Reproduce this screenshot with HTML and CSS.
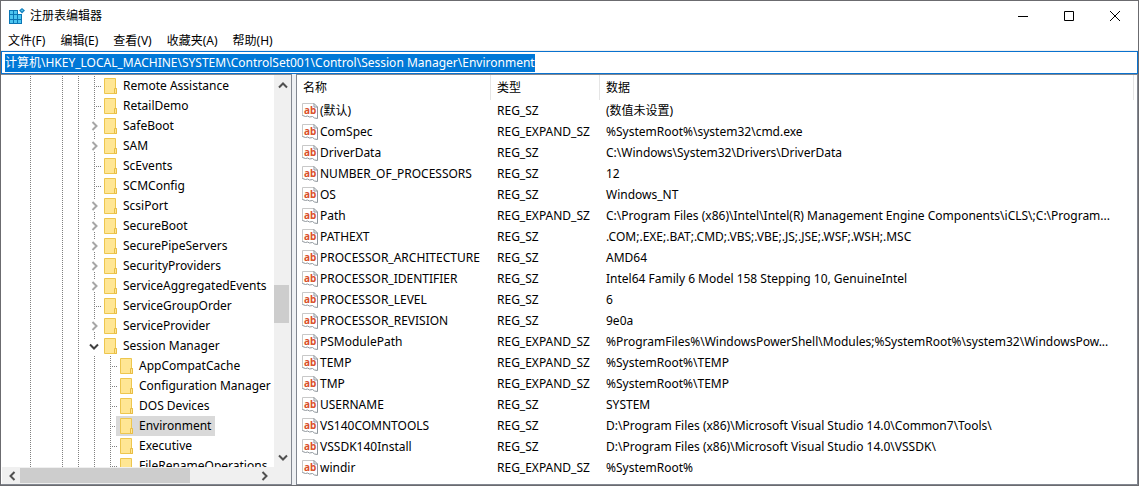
FILE: index.html
```html
<!DOCTYPE html>
<html lang="zh-CN">
<head>
<meta charset="utf-8">
<title>注册表编辑器</title>
<link rel="stylesheet" href="styles.css">
</head>
<body>
<svg class="defs" aria-hidden="true">
  <symbol id="folder" viewBox="0 0 14 16"><path d="M.5.5h11v10h1v5H.5z" fill="#ffe694" stroke="#edc64e"/><path d="M10.500 10.500h2v5h-2z" fill="#ffe694" stroke="#e8bd45"/></symbol>
  <symbol id="value" viewBox="0 0 16 16"><path d="M.5.5H12l3.500 3.500v11.500l-3-.5-2-1.500-3 .5-2-1-2 .5-3-1z" fill="#fff"/><path d="M.5 13V.5H12" fill="none" stroke="#c8c8c8"/><path d="M12 .5V4h3.500L12 .5M15.500 4v11.500l-3-.5-2-1.500-3 .5-2-1-2 .5-3-1" fill="none" stroke="#8f969c"/></symbol>
  <symbol id="right" viewBox="0 0 8 10"><path d="M1.500 1l4 4-4 4" fill="none" stroke="currentColor" stroke-width="2"/></symbol>
  <symbol id="down" viewBox="0 0 10 8"><path d="M1 1.500l4 4 4-4" fill="none" stroke="currentColor" stroke-width="2"/></symbol>
</svg>
<div class="window">
  <header class="titlebar">
    <svg class="appicon" viewBox="0 0 16 16" aria-hidden="true"><path d="M0 2h9v4h4v10H0z" fill="#0a76b5"/><path d="M1 3h3v3H1zM5 3h3v3H5zM1 7h3v4H1zM5 7h3v4H5zM9 7h3v4H9zM1 12h3v3H1zM5 12h3v3H5zM9 12h3v3H9z" fill="#4cc5f0"/><path d="M13 0l3 2.500L13 5.500l-3-3z" fill="#1683c0"/><path d="M13 1.500l1 1-1 1-1-1z" fill="#6bd2f5"/></svg>
    <h1>注册表编辑器</h1>
    <div class="controls">
      <button aria-label="最小化"><svg viewBox="0 0 10 10"><path d="M0 5.500h10"/></svg></button>
      <button aria-label="最大化"><svg viewBox="0 0 10 10"><path d="M.5.5h9v9h-9z"/></svg></button>
      <button aria-label="关闭"><svg viewBox="0 0 10 10"><path d="M0 0l10 10M10 0L0 10"/></svg></button>
    </div>
  </header>
  <nav class="menu"><button>文件(F)</button><button>编辑(E)</button><button>查看(V)</button><button>收藏夹(A)</button><button>帮助(H)</button></nav>
  <div class="address"><input aria-label="地址" value="计算机\HKEY_LOCAL_MACHINE\SYSTEM\ControlSet001\Control\Session Manager\Environment"></div>
  <main class="panes">
    <section class="treepane" aria-label="注册表项">
      <ul class="tree" id="tree"></ul>
      <div class="vbar"><svg class="ar up"><use href="#down"/></svg><div class="thumb"></div><svg class="ar"><use href="#down"/></svg></div>
      <div class="hbar"><svg class="ar left"><use href="#right"/></svg><div class="thumb"></div><svg class="ar"><use href="#right"/></svg></div>
    </section>
    <section class="list">
      <table>
        <colgroup><col class="c1"><col class="c2"><col></colgroup>
        <thead><tr><th>名称</th><th>类型</th><th>数据</th></tr></thead>
        <tbody id="rows"></tbody>
      </table>
    </section>
  </main>
</div>
<script src="app.js"></script>
</body>
</html>
```
FILE: styles.css
```css
* { box-sizing: border-box; }
body, h1, ul { margin: 0; padding: 0; }
body, button, input { font: 12px/20px "Noto Sans", "Noto Sans CJK SC", sans-serif; color: #000; }
button { border: 0; background: none; padding: 0; }
.defs { position: absolute; width: 0; height: 0; }
.window { display: flex; flex-direction: column; height: 100vh; border: 1px solid #6b6b6f; background: #fff; }
.titlebar { display: flex; align-items: center; height: 30px; padding-left: 8px; }
.appicon { width: 16px; height: 16px; margin-right: 5px; }
h1 { font-size: 12px; font-weight: 400; }
.controls { display: flex; margin-left: auto; }
.controls button { width: 46px; height: 30px; display: grid; place-items: center; }
.controls svg { width: 10px; height: 10px; fill: none; stroke: #000; }
.menu { display: flex; gap: 15px; height: 20px; padding-left: 7px; border-bottom: 1px solid #f0f0f0; }
.address { border: 1px solid #0a72cf; padding: 2px 3px; height: 23px; display: flex; }
.address input { flex: 1; min-width: 0; height: 18px; line-height: 18px; border: 0; padding: 0; outline: 0; background: #fff; }
.address input::selection { background: #0078d7; color: #fff; }
.panes { flex: 1; min-height: 0; display: grid; grid-template: minmax(0, 1fr) / 291px minmax(0, 1fr); gap: 4px; background: #eef0f3; }
.treepane { display: grid; grid-template: minmax(0, 1fr) 17px / minmax(0, 1fr) 17px; border: 1px solid #828790; border-left: 0; padding-left: 1px; background: #fff; }
.tree { overflow: hidden; list-style: none; padding-top: 1px; }
.node { display: flex; align-items: center; height: 20px; white-space: nowrap; }
.guide { flex: none; width: 16px; height: 20px; }
.guide > svg { display: block; width: 16px; height: 20px; overflow: visible; }
.dots { fill: none; stroke: #808080; stroke-dasharray: 1 1; }
.label { display: flex; align-items: center; height: 20px; margin-left: 2px; padding: 0 4px; gap: 5px; }
.label svg { width: 14px; height: 16px; }
.selected { background: #d9d9d9; }
.vbar, .hbar { display: flex; align-items: center; background: #f0f0f0; color: #505050; }
.vbar { flex-direction: column; padding: 6px 0 5px; }
.hbar { grid-column: 1 / 3; padding: 0 22px 0 6px; }
.ar { width: 10px; height: 8px; flex: none; }
.hbar .ar { width: 8px; height: 10px; }
.up, .left { transform: rotate(180deg); }
.thumb { background: #cdcdcd; }
.vbar .thumb { width: 15px; height: 38px; margin: 196px 2px auto 0; }
.hbar .thumb { width: 170px; height: 15px; margin: 0 auto 0 4px; }
.list { min-width: 0; overflow: hidden; border: 1px solid #828790; background: #fff; padding-right: 3px; }
table { width: 100%; table-layout: fixed; border-collapse: separate; border-spacing: 0; }
.c1 { width: 194px; }
.c2 { width: 109px; }
th { height: 25px; font-weight: 400; text-align: left; padding: 0 6px; border-right: 1px solid #e5e5e5; }
td { height: 21px; padding: 0 6px; white-space: nowrap; }
td:first-child { padding-left: 5px; }
.name { display: flex; align-items: center; gap: 2px; }
.name svg { width: 16px; height: 16px; flex: none; }
.glyph { font: 700 10px "Noto Sans", sans-serif; fill: #d9502b; }
```
FILE: app.js
```js
const keys = [
  ["Remote Assistance", 0], ["RetailDemo", 0], ["SafeBoot", 1], ["SAM", 1], ["ScEvents", 0], ["SCMConfig", 0],
  ["ScsiPort", 1], ["SecureBoot", 1], ["SecurePipeServers", 1], ["SecurityProviders", 1], ["ServiceAggregatedEvents", 1],
  ["ServiceGroupOrder", 0], ["ServiceProvider", 1], ["Session Manager", 2],
  ["AppCompatCache", 0, 1], ["Configuration Manager", 0, 1], ["DOS Devices", 0, 1], ["Environment", 0, 1],
  ["Executive", 0, 1], ["FileRenameOperations", 0, 1]
];
const line = d => `<path class="dots" d="${d}"/>`;
const cell = body => `<span class="guide"><svg viewBox="0 0 16 20">${body}</svg></span>`;
const full = cell(line("M12.500 0v20"));
document.getElementById("tree").innerHTML = keys.map(([name, state, deep]) => {
  let body = line("M12.500 0v20M14 10.500h6");
  if (state === 1) body = line("M12.500 0v4M12.500 16v4") + '<svg x="9" y="5" width="8" height="10" color="#a6a6a6"><use href="#right"/></svg>';
  if (state === 2) body = line("M12.500 0v4") + '<svg x="7" y="7" width="10" height="8" color="#404040"><use href="#down"/></svg>';
  const lead = cell("") + full + cell("") + full + full + (deep ? full : "");
  return `<li class="node">${lead}${cell(body)}<span class="label${name === "Environment" ? " selected" : ""}"><svg><use href="#folder"/></svg>${name}</span></li>`;
}).join("");

const S = "REG_SZ", E = "REG_EXPAND_SZ";
const values = [
  ["(默认)", S, "(数值未设置)"],
  ["ComSpec", E, "%SystemRoot%\\system32\\cmd.exe"],
  ["DriverData", S, "C:\\Windows\\System32\\Drivers\\DriverData"],
  ["NUMBER_OF_PROCESSORS", S, "12"],
  ["OS", S, "Windows_NT"],
  ["Path", E, "C:\\Program Files (x86)\\Intel\\Intel(R) Management Engine Components\\iCLS\\;C:\\Program..."],
  ["PATHEXT", S, ".COM;.EXE;.BAT;.CMD;.VBS;.VBE;.JS;.JSE;.WSF;.WSH;.MSC"],
  ["PROCESSOR_ARCHITECTURE", S, "AMD64"],
  ["PROCESSOR_IDENTIFIER", S, "Intel64 Family 6 Model 158 Stepping 10, GenuineIntel"],
  ["PROCESSOR_LEVEL", S, "6"],
  ["PROCESSOR_REVISION", S, "9e0a"],
  ["PSModulePath", E, "%ProgramFiles%\\WindowsPowerShell\\Modules;%SystemRoot%\\system32\\WindowsPow..."],
  ["TEMP", E, "%SystemRoot%\\TEMP"],
  ["TMP", E, "%SystemRoot%\\TEMP"],
  ["USERNAME", S, "SYSTEM"],
  ["VS140COMNTOOLS", S, "D:\\Program Files (x86)\\Microsoft Visual Studio 14.0\\Common7\\Tools\\"],
  ["VSSDK140Install", S, "D:\\Program Files (x86)\\Microsoft Visual Studio 14.0\\VSSDK\\"],
  ["windir", E, "%SystemRoot%"]
];
document.getElementById("rows").innerHTML = values.map(([n, t, d]) =>
  `<tr><td><span class="name"><svg viewBox="0 0 16 16"><use href="#value"/><text x="2" y="11" class="glyph">ab</text></svg>${n}</span></td><td>${t}</td><td>${d}</td></tr>`).join("");

const address = document.querySelector(".address input");
address.focus();
address.select();
address.scrollLeft = 0;
```
